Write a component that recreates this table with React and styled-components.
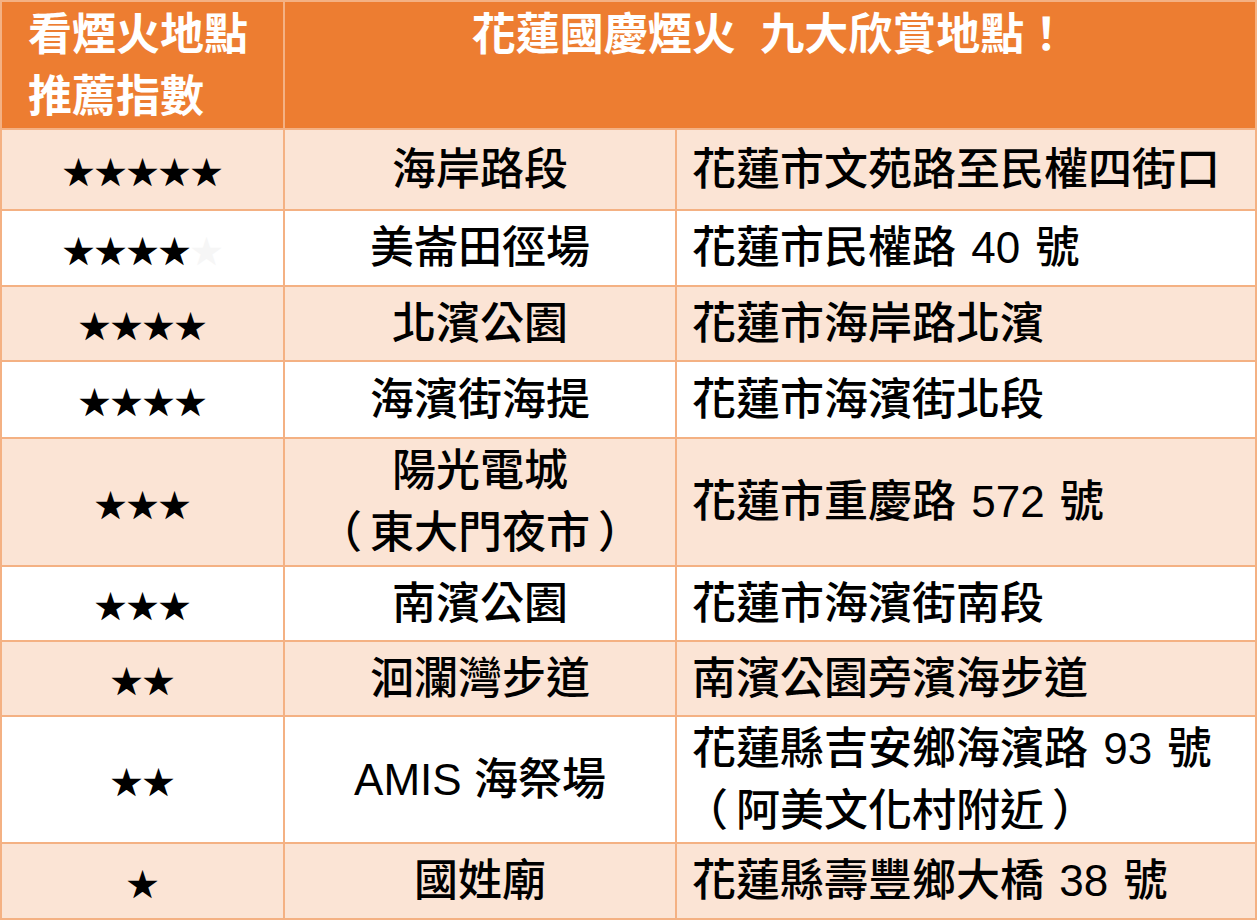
import React from "react";
import styled, { createGlobalStyle } from "styled-components";

const Global = createGlobalStyle`
  html, body { margin: 0; padding: 0; background: #fff; }
  body { font-family: "Liberation Sans", "Noto Sans CJK TC", sans-serif; }
`;

const Table = styled.table`
  width: 1255px;
  border-collapse: collapse;
  table-layout: fixed;
  font-family: "Liberation Sans", "Noto Sans CJK TC", sans-serif;
  font-size: 44px;
  line-height: 62px;
  color: #000;
  text-spacing-trim: space-all;
`;

const HeadRow = styled.tr`
  height: 128px;
  background: #ed7d31;
`;

const HeadCell = styled.th`
  padding: 2px 0 0 ${(p) => (p.$left ? "26px" : "0")};
  text-align: ${(p) => (p.$left ? "left" : "center")};
  vertical-align: top;
  color: #fff;
  font-weight: 700;
  white-space: pre-wrap;
  border-top: 2px solid #f4b183;
  border-left: 2px solid ${(p) => (p.$left ? "#f4b183" : "#fff")};
  border-right: 2px solid #f4b183;
  border-bottom: 2px solid #f4b183;
`;

const Row = styled.tr`
  height: ${(p) => p.$h}px;
  background: ${(p) => (p.$alt ? "#fbe4d5" : "#ffffff")};
`;

const Cell = styled.td`
  border: 2px solid #f4b183;
  padding: 0;
  text-align: center;
  vertical-align: middle;
  font-weight: 500;
`;

const AddrCell = styled.td`
  border: 2px solid #f4b183;
  padding: 0 0 0 15px;
  text-align: left;
  vertical-align: middle;
  font-weight: 500;
  word-spacing: 3px;
`;

const Stars = styled.span`
  font-family: "Noto Sans CJK TC", sans-serif;
  font-size: 32px;
  letter-spacing: 0;
`;

const FaintStar = styled.span`
  color: #f6f6f6;
`;

const Paren = styled.span`
  display: inline-block;
  margin: ${(p) => (p.$open ? "0 8px 0 -8px" : "0 -8px 0 8px")};
`;

const rows = [
  { stars: 5, name: ["海岸路段"], addr: ["花蓮市文苑路至民權四街口"], h: 81 },
  { stars: 4, faint: true, name: ["美崙田徑場"], addr: ["花蓮市民權路 40 號"], h: 76 },
  { stars: 4, name: ["北濱公園"], addr: ["花蓮市海岸路北濱"], h: 75 },
  { stars: 4, name: ["海濱街海提"], addr: ["花蓮市海濱街北段"], h: 77 },
  { stars: 3, name: ["陽光電城", "（東大門夜市）"], addr: ["花蓮市重慶路 572 號"], h: 128 },
  { stars: 3, name: ["南濱公園"], addr: ["花蓮市海濱街南段"], h: 75 },
  { stars: 2, name: ["洄瀾灣步道"], addr: ["南濱公園旁濱海步道"], h: 75 },
  { stars: 2, name: ["AMIS 海祭場"], addr: ["花蓮縣吉安鄉海濱路 93 號", "（阿美文化村附近）"], h: 127 },
  { stars: 1, name: ["國姓廟"], addr: ["花蓮縣壽豐鄉大橋 38 號"], h: 76 },
];

const renderLine = (l) => {
  if (l.startsWith("（") && l.endsWith("）")) {
    return (
      <>
        <Paren $open>（</Paren>
        {l.slice(1, -1)}
        <Paren>）</Paren>
      </>
    );
  }
  return l;
};

const Lines = ({ lines }) =>
  lines.map((l, i) => (
    <React.Fragment key={i}>
      {i > 0 && <br />}
      {renderLine(l)}
    </React.Fragment>
  ));

export default function App() {
  return (
    <>
      <Global />
      <Table>
        <colgroup>
          <col style={{ width: 283 }} />
          <col style={{ width: 392 }} />
          <col style={{ width: 580 }} />
        </colgroup>
        <thead>
          <HeadRow>
            <HeadCell $left>
              看煙火地點
              <br />
              推薦指數
            </HeadCell>
            <HeadCell colSpan={2}>{"花蓮國慶煙火  九大欣賞地點！"}</HeadCell>
          </HeadRow>
        </thead>
        <tbody>
          {rows.map((r, i) => (
            <Row key={i} $h={r.h} $alt={i % 2 === 0}>
              <Cell>
                <Stars>
                  {"★".repeat(r.stars)}
                  {r.faint && <FaintStar>★</FaintStar>}
                </Stars>
              </Cell>
              <Cell>
                <Lines lines={r.name} />
              </Cell>
              <AddrCell>
                <Lines lines={r.addr} />
              </AddrCell>
            </Row>
          ))}
        </tbody>
      </Table>
    </>
  );
}
